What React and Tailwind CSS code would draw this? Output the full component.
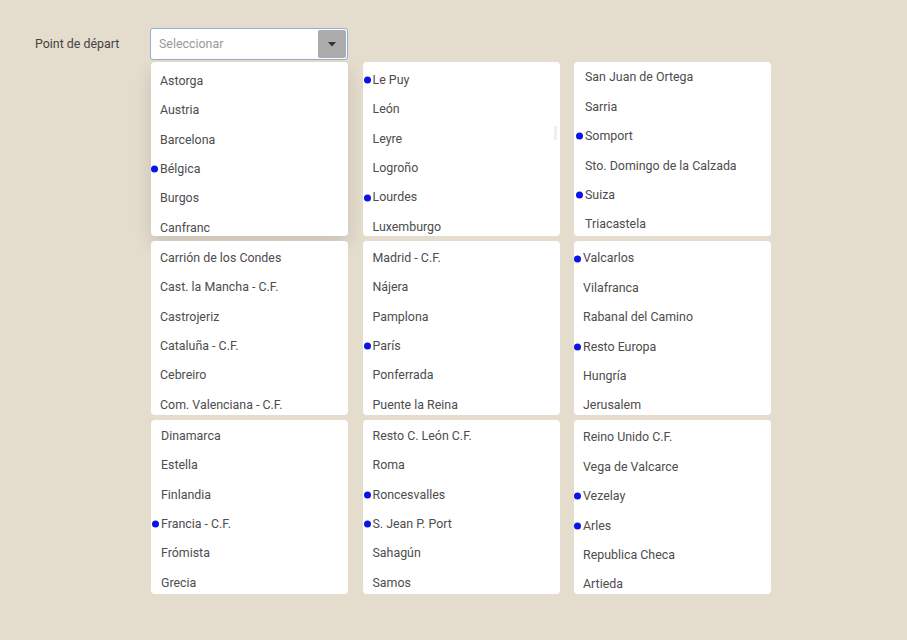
import React from 'react';

const panels = [
    { pad: 'pt-[4.5px] pl-[9px]', items: ['Astorga', 'Austria', 'Barcelona', '*Bélgica', 'Burgos', 'Canfranc'], shadow: true },
    { pad: 'pt-[3.5px] pl-[10px]', items: ['*Le Puy', 'León', 'Leyre', 'Logroño', '*Lourdes', 'Luxemburgo'], bar: true },
    { pad: 'pt-[1px] pl-[11px]', items: ['San Juan de Ortega', 'Sarria', '*Somport', 'Sto. Domingo de la Calzada', '*Suiza', 'Triacastela'] },
    { pad: 'pt-[2.5px] pl-[9px]', items: ['Carrión de los Condes', 'Cast. la Mancha - C.F.', 'Castrojeriz', 'Cataluña - C.F.', 'Cebreiro', 'Com. Valenciana - C.F.'] },
    { pad: 'pt-[2.5px] pl-[10px]', items: ['Madrid - C.F.', 'Nájera', 'Pamplona', '*París', 'Ponferrada', 'Puente la Reina'] },
    { pad: 'pt-[3px] pl-[9px]', items: ['*Valcarlos', 'Vilafranca', 'Rabanal del Camino', '*Resto Europa', 'Hungría', 'Jerusalem'] },
    { pad: 'pt-[1.5px] pl-[10px]', items: ['Dinamarca', 'Estella', 'Finlandia', '*Francia - C.F.', 'Frómista', 'Grecia'] },
    { pad: 'pt-[1.5px] pl-[10px]', items: ['Resto C. León C.F.', 'Roma', '*Roncesvalles', '*S. Jean P. Port', 'Sahagún', 'Samos'] },
    { pad: 'pt-[3px] pl-[9px]', items: ['Reino Unido C.F.', 'Vega de Valcarce', '*Vezelay', '*Arles', 'Republica Checa', 'Artieda'] },
];

const Item = ({ label }) => {
    const marked = label.startsWith('*');
    const text = marked ? label.slice(1) : label;
    return (
        <div className="h-[29.4px] flex items-center">
            <span className="relative">
                {marked && (
                    <span className="absolute right-[calc(100%+2px)] top-1/2 -translate-y-1/2 w-[7px] h-[7px] rounded-full bg-[#0a14e6]" />
                )}
                {text}
            </span>
        </div>
    );
};

const App = () => {
    return (
        <div
            className="w-full h-[640px] bg-[#e4dccd] text-[12.4px] text-[#4d4d4d] overflow-hidden"
            style={{ fontFamily: 'Roboto, "Liberation Sans", sans-serif' }}
        >
            {/* Select row */}
            <div className="flex items-center pt-[28px] pl-[35px]">
                <div className="w-[115px] text-[#444]">Point de départ</div>
                <div className="w-[198px] h-[32px] bg-white border border-[#8fb0d8] rounded-[3px] flex items-center justify-between pl-[8px] pr-[1px]">
                    <span className="text-[#999]">Seleccionar</span>
                    <div className="w-[28px] h-[28px] bg-[#acacac] rounded-[2px] flex items-center justify-center">
                        <svg width="8" height="5" viewBox="0 0 8 5">
                            <path d="M0 0 L8 0 L4 4.5 Z" fill="#333" />
                        </svg>
                    </div>
                </div>
            </div>

            {/* Options grid */}
            <div className="ml-[151px] grid grid-cols-[197px_197px_197px] gap-x-[14.5px] gap-y-[5px] mt-[2px]">
                {panels.map((p, i) => (
                    <div
                        key={i}
                        className={`relative h-[174px] bg-white rounded-[4px] overflow-hidden ${p.pad} ${
                            p.shadow ? 'shadow-[0_8px_18px_rgba(0,0,0,0.12)]' : ''
                        }`}
                    >
                        {p.items.map((it) => (
                            <Item key={it} label={it} />
                        ))}
                        {p.bar && <div className="absolute right-[3px] top-[64px] w-[3px] h-[14px] bg-[#f0f0f0]" />}
                    </div>
                ))}
            </div>
        </div>
    );
};

export default App;
